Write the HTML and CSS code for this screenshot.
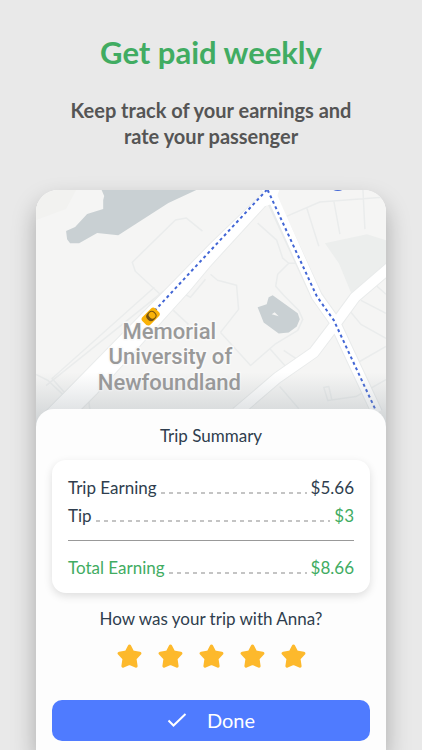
FILE: index.html
```html
<!DOCTYPE html>
<html lang="en">
<head>
    <meta charset="UTF-8">
    <meta name="viewport" content="width=device-width, initial-scale=1.0">
    <title>Trip Summary</title>
    <link rel="stylesheet" href="styles.css">
</head>
<body>

    <header class="intro">
        <h1>Get paid weekly</h1>
        <p>Keep track of your earnings and rate your passenger</p>
    </header>

    <main class="phone">
        <svg class="map" viewBox="36 190 349 240" role="img" aria-label="Trip map">
            <defs>
                <linearGradient id="map-fade" x1="0" y1="0" x2="0" y2="1">
                    <stop offset="0" stop-color="#8b959c" stop-opacity="0"/>
                    <stop offset="1" stop-color="#8b959c" stop-opacity=".4"/>
                </linearGradient>
            </defs>
            <rect x="36" y="190" width="349" height="240" fill="#f5f5f4"/>
            <path d="M36 190H76L66 209 36 220Z" fill="#f2f2f0"/>

            <!-- Water and parks -->
            <path d="M101 189L104 196 103 200 103 209 87 214 75 227 66 231 67 239 70 243H79L97 233 118 235 168 203 198 189Z" fill="#c9d0d3"/>
            <path d="M324 243L366 234 385 240V267L352 297 338 263Z" fill="#eceeed"/>
            <path d="M257 307L266 304 268 297 272 295 297 313 299 319 296 326 288 332 278 333 263 322Z" fill="#c9d0d3"/>
            <path d="M271 314L274 312 278 316Z" fill="#f5f5f4"/>

            <!-- Small streets -->
            <g fill="none" stroke="#eaecec" stroke-width="1.500" stroke-linejoin="round">
                <path d="M202 231L186 218 175 220 132 262 135 271 162 296M154 287L52 378 68 396M163 291L46 385M36 374L48 380 66 397"/>
                <path d="M205 279L190 297 181 292M173 310L188 324M257 223L276 240 282 258 288 263H296M288 263L277 274 275 286 283 295 298 310 302 319 297 330 274 344 250 365 220 332M210 274L217 280 236 285 238 309 220 332M269 348L285 366M283 350L295 358M279 386L298 408"/>
                <path d="M284 217L319 202 385 197M306 208L318 246M333 201L339 234M362 190L364 229M350 312L360 324 385 338M360 300L385 313M357 362L385 346M385 379L355 396 327 400 323 387 328 386 331 399M376 286L385 294M88 397L90 410"/>
            </g>

            <!-- Main roads -->
            <g stroke="#e9ebeb" stroke-width="1" fill="#fff">
                <path d="M256 186L263 192 210 243 162 292 63 393 44 412H78L97 393 190 290 210 266 265 206 280 186Z"/>
            </g>
            <path d="M390 266L354 297 335 323 313 352 277 377 236 412M267 190L316 296 333 320 376 412" fill="none" stroke="#e9ebeb" stroke-width="12"/>
            <path d="M390 266L354 297 335 323 313 352 277 377 236 412M267 186L316 296 333 320 376 412" fill="none" stroke="#fff" stroke-width="10"/>
            <path d="M256 186L263 192 250 206 265 206 274 203 280 186Z" fill="#fff"/>

            <!-- Route -->
            <path d="M150 315L266 190" class="route"/>
            <path d="M267 190L316 296 333 320 374 408" class="route"/>
            <circle cx="337" cy="181" r="10" fill="#4266d5"/>

            <!-- Car -->
            <g transform="rotate(45 150 316)">
                <rect x="145" y="307" width="11" height="18" rx="3" fill="#f9b208"/>
                <rect x="146" y="310" width="9" height="10" rx="4" fill="#755312"/>
                <rect x="147" y="311" width="7" height="6" rx="3" fill="#f9b208"/>
            </g>

            <g class="map-label">
                <text x="169" y="339">Memorial</text>
                <text x="170" y="364">University of</text>
                <text x="169" y="389">Newfoundland</text>
            </g>
            <rect x="36" y="372" width="349" height="58" fill="url(#map-fade)"/>
        </svg>

        <section class="sheet">
            <h2>Trip Summary</h2>

            <dl class="summary">
                <div class="row">
                    <dt>Trip Earning</dt>
                    <dd>$5.66</dd>
                </div>
                <div class="row tip">
                    <dt>Tip</dt>
                    <dd>$3</dd>
                </div>
                <div class="row total">
                    <dt>Total Earning</dt>
                    <dd>$8.66</dd>
                </div>
            </dl>

            <p class="question" id="question">How was your trip with Anna?</p>

            <svg width="0" height="0" class="sprite" aria-hidden="true">
                <symbol id="star" viewBox="0 0 25 25">
                    <path d="M12.500 2.300L15.600 8.200 22.700 9.400 17.800 14.600 18.900 22 12.500 19.200 6.100 22 7.200 14.600 2.300 9.400 9.400 8.200Z" fill="#fdb92c" stroke="#fdb92c" stroke-width="3.400" stroke-linejoin="round"/>
                </symbol>
            </svg>
            <div class="stars" role="group" aria-labelledby="question">
                <button type="button" aria-label="1 star"><svg><use href="#star"/></svg></button>
                <button type="button" aria-label="2 stars"><svg><use href="#star"/></svg></button>
                <button type="button" aria-label="3 stars"><svg><use href="#star"/></svg></button>
                <button type="button" aria-label="4 stars"><svg><use href="#star"/></svg></button>
                <button type="button" aria-label="5 stars"><svg><use href="#star"/></svg></button>
            </div>

            <button type="button" class="done">
                <svg viewBox="0 0 20 16" aria-hidden="true"><path d="M1.500 8.500L6.500 13.500 18.500 2"/></svg>
                Done
            </button>
        </section>
    </main>

</body>
</html>
```

FILE: styles.css
```css
* {
    box-sizing: border-box;
}
body {
    margin: 0;
    min-height: 100vh;
    display: flex;
    flex-direction: column;
    font-family: Lato, sans-serif;
    background-color: #e9e9e9;
    color: #2f3e4e;
}
h1, h2, p, dl, dd {
    margin: 0;
}
.intro {
    padding: 32px 48px 41px;
    text-align: center;
}
.intro h1 {
    font-size: 31px;
    line-height: 40px;
    font-weight: bold;
    color: #41ac62;
}
.intro p {
    max-width: 300px;
    margin: 25px auto 0;
    font-size: 20px;
    line-height: 26px;
    font-weight: bold;
    color: #555;
}
.phone {
    flex: 1;
    display: flex;
    flex-direction: column;
    margin: 0 36px;
    border-radius: 22px 22px 0 0;
    background-color: #fdfdfd;
    overflow: hidden;
    box-shadow: 0 12px 24px rgba(0, 0, 0, 0.28);
}
.map {
    display: block;
    width: 100%;
}
.route {
    fill: none;
    stroke: #4266d5;
    stroke-width: 2;
    stroke-dasharray: 3 3;
}
.map-label {
    font-family: Roboto, sans-serif;
    font-size: 22px;
    font-weight: 500;
    text-anchor: middle;
    fill: #999;
    stroke: #fafafa;
    stroke-width: 3px;
    stroke-linejoin: round;
    paint-order: stroke;
}
.sheet {
    flex: 1;
    position: relative;
    margin-top: -22px;
    padding: 16px 16px 9px;
    border-radius: 18px 18px 0 0;
    background-color: #fdfdfd;
    text-align: center;
}
.sheet h2 {
    font-size: 17px;
    line-height: 22px;
    font-weight: normal;
}
.summary {
    margin-top: 13px;
    padding: 14px 16px 11px;
    border-radius: 14px;
    background-color: #fff;
    box-shadow: 0 3px 8px rgba(0, 0, 0, 0.13);
    font-size: 17px;
    line-height: 28px;
}
.row {
    display: flex;
    gap: 4px;
}
/* dashed leader between the name and the amount */
.row dt {
    flex: 1;
    display: flex;
    gap: 4px;
}
.row dt::after {
    content: "";
    flex: 1;
    height: 2px;
    margin-top: 18px;
    background: repeating-linear-gradient(to right, #c4c4c4 0 4px, transparent 4px 8px);
}
.tip dd,
.total {
    color: #41ac62;
}
.total {
    margin-top: 10px;
    padding-top: 13px;
    border-top: 1px solid #999;
}
.question {
    margin-top: 15px;
    font-size: 17px;
    line-height: 22px;
}
.sprite {
    display: block;
}
.stars {
    display: flex;
    justify-content: center;
    gap: 16px;
    margin-top: 14px;
}
.stars button {
    width: 25px;
    height: 25px;
    padding: 0;
    border: none;
    background: none;
    cursor: pointer;
}
.stars svg {
    display: block;
    width: 25px;
    height: 25px;
}
.done {
    display: flex;
    align-items: center;
    justify-content: center;
    gap: 20px;
    width: 100%;
    height: 41px;
    margin-top: 31px;
    padding: 0;
    border: none;
    border-radius: 10px;
    background-color: #4f7bff;
    color: #fff;
    font-family: inherit;
    font-size: 20px;
    cursor: pointer;
}
.done svg {
    width: 20px;
    height: 16px;
    fill: none;
    stroke: #fff;
    stroke-width: 2;
}
```
